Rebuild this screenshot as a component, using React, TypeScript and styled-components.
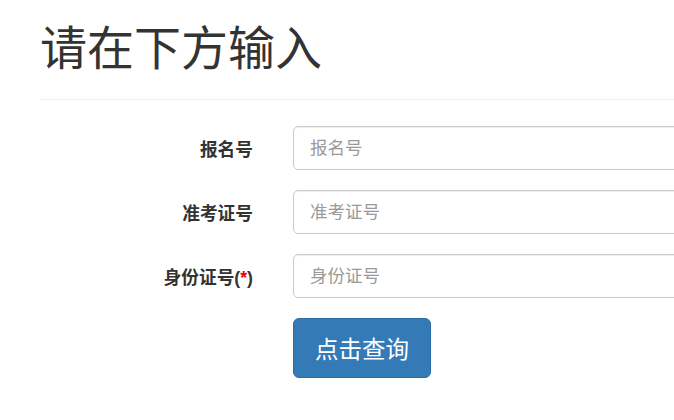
import React from 'react';
import styled, { createGlobalStyle } from 'styled-components';

const GlobalStyle = createGlobalStyle`
  html, body {
    margin: 0;
    padding: 0;
    background: #fff;
    overflow: hidden;
  }
  body {
    font-family: "Helvetica Neue", "Liberation Sans", "Noto Sans CJK SC", sans-serif;
    color: #333;
  }
`;

const Page = styled.div`
  width: 900px;
  padding: 0 0 0 40px;
`;

const Title = styled.h1`
  margin: 0;
  padding-top: 20px;
  font-size: 47px;
  font-weight: 400;
  line-height: 57px;
  color: #333;
  font-family: "Liberation Sans", "Noto Sans CJK SC", sans-serif;
`;

const Divider = styled.hr`
  margin: 22px 0 26px;
  border: 0;
  border-top: 1px solid #eee;
`;

const Form = styled.form`
  display: grid;
  grid-template-columns: 213px 1fr;
  column-gap: 40px;
  row-gap: 20px;
  align-items: center;
`;

const Label = styled.label`
  text-align: right;
  font-weight: 700;
  font-size: 17.7px;
  color: #333;
`;

const Required = styled.span`
  color: #e00;
`;

const Input = styled.input`
  box-sizing: border-box;
  height: 44px;
  width: 100%;
  padding: 0 16px;
  font-size: 17.5px;
  font-family: inherit;
  color: #555;
  border: 1px solid #ccc;
  border-radius: 5px;
  box-shadow: inset 0 1px 1px rgba(0, 0, 0, 0.075);
  outline: none;
  &::placeholder {
    color: #999;
  }
`;

const Submit = styled.button`
  grid-column: 2;
  justify-self: start;
  height: 60px;
  padding: 0 21px;
  font-size: 23.5px;
  font-family: inherit;
  color: #fff;
  background: #337ab7;
  border: 1px solid #2e6da4;
  border-radius: 6px;
  cursor: pointer;
`;

const fields = [
  { label: '报名号', placeholder: '报名号' },
  { label: '准考证号', placeholder: '准考证号' },
  { label: '身份证号', placeholder: '身份证号', required: true },
];

export default function App() {
  return (
    <Page>
      <GlobalStyle />
      <Title>请在下方输入</Title>
      <Divider />
      <Form onSubmit={(e) => e.preventDefault()}>
        {fields.map((f) => (
          <React.Fragment key={f.label}>
            <Label>
              {f.label}
              {f.required && (
                <>
                  (<Required>*</Required>)
                </>
              )}
            </Label>
            <Input placeholder={f.placeholder} />
          </React.Fragment>
        ))}
        <Submit type="submit">点击查询</Submit>
      </Form>
    </Page>
  );
}
